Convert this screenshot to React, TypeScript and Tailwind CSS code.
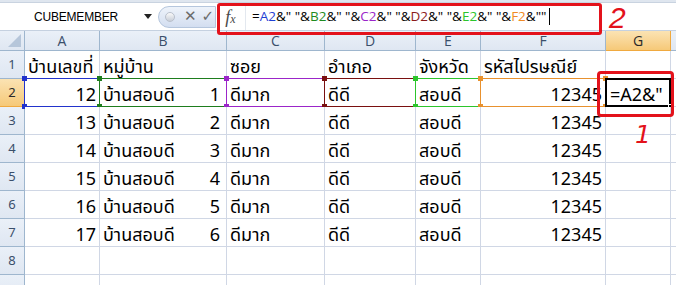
import React from "react";

const FONT = '"Noto Sans", "Noto Sans Thai", Tahoma, "DejaVu Sans", sans-serif';

const colLetters = ["A", "B", "C", "D", "E", "F", "G", ""];

function RefBox({ color }: { color: string }) {
  const sq = "absolute w-[5px] h-[5px]";
  return (
    <div className="pointer-events-none absolute inset-[-1px] border" style={{ borderColor: color }}>
      <div className={`${sq} -left-[3px] -top-[3px]`} style={{ background: color }} />
      <div className={`${sq} -right-[3px] -top-[3px]`} style={{ background: color }} />
      <div className={`${sq} -left-[3px] -bottom-[3px]`} style={{ background: color }} />
      <div className={`${sq} -right-[3px] -bottom-[3px]`} style={{ background: color }} />
    </div>
  );
}

function Cell({
  children,
  align = "left",
  refColor,
  className = "",
}: {
  children?: React.ReactNode;
  align?: "left" | "right" | "between";
  refColor?: string;
  className?: string;
}) {
  const j = align === "right" ? "justify-end" : align === "between" ? "justify-between" : "justify-start";
  return (
    <div
      className={`relative flex items-center ${j} border-r border-b border-[#d0d7e5] bg-white px-[3px] pt-[2px] text-[18px] leading-none text-black whitespace-nowrap ${className}`}
    >
      {children}
      {refColor ? <RefBox color={refColor} /> : null}
    </div>
  );
}

function RowHeader({ n, active }: { n?: number; active?: boolean }) {
  return (
    <div
      className={`flex items-center justify-center border-r border-b text-[13px] ${
        active
          ? "bg-gradient-to-b from-[#fbe3b3] to-[#f6c978] border-[#f0a93f] text-[#2a2a2a]"
          : "bg-gradient-to-b from-[#eaf0f8] to-[#dfe7f2] border-[#9eb6ce] text-[#3a4f6b]"
      }`}
    >
      {n}
    </div>
  );
}

export default function App() {
  const data = [
    [12, 1],
    [13, 2],
    [14, 3],
    [15, 4],
    [16, 5],
    [17, 6],
  ];

  return (
    <div className="relative w-[676px] h-[285px] overflow-hidden bg-white" style={{ fontFamily: FONT }}>
      {/* top strip */}
      <div className="h-[3px] bg-[#dfe6ef] border-b border-[#c9d3e0]" />
      {/* formula bar */}
      <div className="flex h-[28px] items-center bg-white border-b border-[#c5d1e0]">
        <div className="flex h-full w-[158px] items-center pl-[34px] pr-[6px]">
          <span className="text-[12px] text-black tracking-[-0.2px]" style={{ fontFamily: '"Liberation Sans", Arial, sans-serif' }}>
            CUBEMEMBER
          </span>
          <div className="ml-auto h-0 w-0 border-l-[4px] border-r-[4px] border-t-[5px] border-l-transparent border-r-transparent border-t-[#222]" />
        </div>
        <div className="flex h-[22px] w-[58px] items-center rounded-l-full bg-gradient-to-b from-[#eef3fa] to-[#d3def0] border border-[#b5c6dd] pl-[6px]">
          <div className="h-[10px] w-[10px] rounded-full bg-gradient-to-b from-[#fafafa] to-[#c8ced8] border border-[#b9c0cc]" />
          <span className="ml-[9px] text-[15px] text-[#6b6b6b] leading-none" style={{ fontFamily: '"DejaVu Sans", sans-serif' }}>✕</span>
          <span className="ml-[5px] text-[15px] text-[#6b6b6b] leading-none" style={{ fontFamily: '"DejaVu Sans", sans-serif' }}>✓</span>
        </div>
        <div className="flex h-full w-[30px] items-center justify-center border-r border-[#e3e8ef]">
          <span className="italic text-[18px] leading-none text-[#4a4a4a]" style={{ fontFamily: '"Liberation Serif", serif' }}>
            f<span className="text-[12px]">x</span>
          </span>
        </div>
        <div className="flex items-center pl-[6px] text-[13.5px] text-black whitespace-pre" style={{ fontFamily: '"Open Sans", "Liberation Sans", sans-serif' }}>
          <span>=</span>
          <span className="text-[#1f3fd4]">A2</span>
          <span>&amp;" "&amp;</span>
          <span className="text-[#1e8b1e]">B2</span>
          <span>&amp;" "&amp;</span>
          <span className="text-[#9b25c9]">C2</span>
          <span>&amp;" "&amp;</span>
          <span className="text-[#8b1a1a]">D2</span>
          <span>&amp;" "&amp;</span>
          <span className="text-[#2cc52c]">E2</span>
          <span>&amp;" "&amp;</span>
          <span className="text-[#f08a24]">F2</span>
          <span>&amp;""</span>
          <span className="ml-[3px] inline-block h-[17px] w-[1px] bg-black" />
        </div>
      </div>

      {/* grid */}
      <div className="grid grid-cols-[25px_75px_127px_98px_91px_65px_125px_65px_1fr] grid-rows-[20px_repeat(9,28px)]">
        <div className="relative border-r border-b border-[#9eb6ce] bg-gradient-to-b from-[#eaf0f8] to-[#dfe7f2]">
          <svg className="absolute right-[3px] bottom-[3px]" width="13" height="13" viewBox="0 0 13 13">
            <polygon points="13,0 13,13 0,13" fill="#b6c6da" />
          </svg>
        </div>
        {colLetters.map((c, i) => (
          <div
            key={i}
            className={`flex items-center justify-center border-r border-b text-[14px] ${
              c === "G"
                ? "bg-gradient-to-b from-[#fbe3b3] to-[#f6c978] border-[#f0a93f] text-[#2a2a2a]"
                : "bg-gradient-to-b from-[#eaf0f8] to-[#dfe7f2] border-[#9eb6ce] text-[#3a4f6b]"
            }`}
            style={{ fontFamily: '"Open Sans", sans-serif' }}
          >
            {c}
          </div>
        ))}

        {/* row 1 */}
        <RowHeader n={1} />
        <Cell className="overflow-hidden">บ้านเลขที่</Cell>
        <Cell>หมู่บ้าน</Cell>
        <Cell>ซอย</Cell>
        <Cell>อำเภอ</Cell>
        <Cell>จังหวัด</Cell>
        <Cell className="overflow-hidden">รหัสไปรษณีย์</Cell>
        <Cell />
        <Cell />

        {data.map(([no, m], idx) => {
          const r = idx + 2;
          const first = idx === 0;
          return (
            <React.Fragment key={r}>
              <RowHeader n={r} active={first} />
              <Cell align="right" refColor={first ? "#2233cc" : undefined}>
                {no}
              </Cell>
              <Cell align="between" refColor={first ? "#1e7d1e" : undefined}>
                <span>บ้านสอบดี</span>
                <span className="pr-[3px]">{m}</span>
              </Cell>
              <Cell refColor={first ? "#9b25c9" : undefined}>ดีมาก</Cell>
              <Cell refColor={first ? "#7a1010" : undefined}>ดีดี</Cell>
              <Cell refColor={first ? "#2cc52c" : undefined}>สอบดี</Cell>
              <Cell align="right" refColor={first ? "#e8912e" : undefined}>
                12345
              </Cell>
              {first ? (
                <div className="relative flex items-center border-r border-b border-[#d0d7e5] bg-white pt-[2px]">
                  <div className="absolute inset-[-1px] border-2 border-black" />
                  <div className="absolute right-[-3px] bottom-[-3px] h-[5px] w-[5px] bg-black border border-white" />
                  <span className="pl-[4px] text-[18px] leading-none text-black">=A2&amp;"</span>
                </div>
              ) : (
                <Cell />
              )}
              <Cell />
            </React.Fragment>
          );
        })}

        <RowHeader n={8} />
        {Array.from({ length: 8 }).map((_, i) => (
          <Cell key={`r8-${i}`} />
        ))}
        <RowHeader />
        {Array.from({ length: 8 }).map((_, i) => (
          <Cell key={`r9-${i}`} />
        ))}
      </div>

      {/* annotations */}
      <div className="pointer-events-none absolute left-[217px] top-[3px] h-[32px] w-[385px] rounded-[3px] border-[3px] border-[#e3121b]" />
      <div
        className="pointer-events-none absolute left-[609px] top-[3px] text-[30px] italic leading-none text-[#e3121b]"
        style={{ fontFamily: '"Liberation Sans", sans-serif' }}
      >
        2
      </div>
      <div className="pointer-events-none absolute left-[597px] top-[71px] h-[46px] w-[77px] rounded-[4px] border-[3px] border-[#e3121b]" />
      <div
        className="pointer-events-none absolute left-[635px] top-[122px] text-[25px] italic leading-none text-[#e3121b]"
        style={{ fontFamily: '"DejaVu Sans", sans-serif', fontWeight: 300 }}
      >
        1
      </div>
    </div>
  );
}
